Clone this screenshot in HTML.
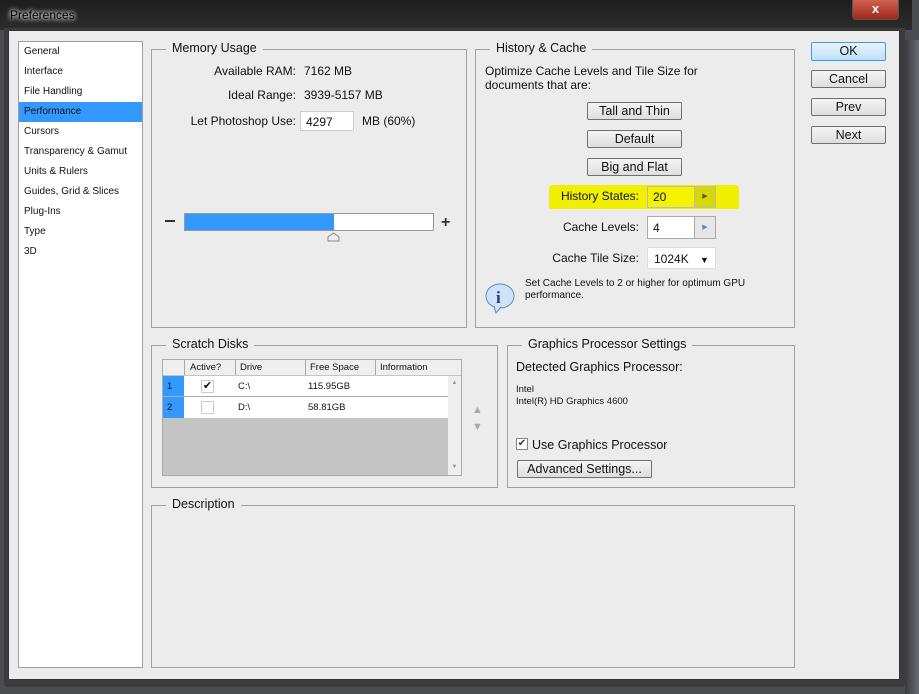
<!DOCTYPE html>
<html><head><style>
*{margin:0;padding:0;box-sizing:border-box}
body{width:919px;height:694px;background:#4a4c52;font-family:"Liberation Sans",sans-serif;font-size:12px;color:#111;position:relative;overflow:hidden}
.a{position:absolute}
.grp{position:absolute;border:1px solid #a0a0a0}
.gt{position:absolute;top:-9px;left:14px;background:#ececec;padding:0 6px;font-size:12.5px;color:#111}
.btn{position:absolute;border:1px solid #707070;border-radius:2px;background:linear-gradient(#f4f4f4,#dedede);text-align:center;font-size:12.5px;line-height:16px}
.side div{height:20px;line-height:20px;padding-left:5px;font-size:10px}
.r{text-align:right}
</style></head><body>
<div class="a" style="left:0;top:0;width:912px;height:30px;background:linear-gradient(#1e1e1e,#2c2c2c)"></div>
<div class="a" style="left:10px;top:8px;font-size:12px;color:#000;text-shadow:0 0 6px #fff,0 0 4px #fff">Preferences</div>
<div class="a" style="left:852px;top:0;width:47px;height:20px;border:1px solid #555;border-top:none;border-radius:0 0 4px 4px;background:linear-gradient(#d06050,#a02818);color:#fff;text-align:center;font-weight:bold;font-size:13px;line-height:18px">x</div>
<div class="a" style="left:905px;top:40px;width:14px;height:654px;background:linear-gradient(90deg,#3a3a3e,#6a6c74)"></div>
<div class="a" style="left:4px;top:28px;width:901px;height:659px;background:#3c3c3c;border-radius:0 0 3px 3px"></div>
<div class="a" style="left:8px;top:30px;width:892px;height:650px;background:#ececec;border:1px solid #333"></div>

<div class="a side" style="left:18px;top:41px;width:125px;height:627px;background:#fff;border:1px solid #a0a0a0">
<div>General</div><div>Interface</div><div>File Handling</div><div style="background:#3399ff">Performance</div><div>Cursors</div><div>Transparency &amp; Gamut</div><div>Units &amp; Rulers</div><div>Guides, Grid &amp; Slices</div><div>Plug-Ins</div><div>Type</div><div>3D</div>
</div>

<div class="grp" style="left:151px;top:49px;width:316px;height:279px"><span class="gt">Memory Usage</span></div>
<div class="a r" style="left:160px;top:64px;width:136px">Available RAM:</div><div class="a" style="left:304px;top:64px">7162 MB</div>
<div class="a r" style="left:160px;top:88px;width:136px">Ideal Range:</div><div class="a" style="left:304px;top:88px">3939-5157 MB</div>
<div class="a r" style="left:160px;top:114px;width:136px">Let Photoshop Use:</div>
<div class="a" style="left:300px;top:111px;width:54px;height:20px;background:#fff;border:1px solid #ccc;padding:3px 5px">4297</div>
<div class="a" style="left:362px;top:114px">MB (60%)</div>
<div class="a" style="left:165px;top:220px;width:10px;height:2px;background:#333"></div>
<div class="a" style="left:184px;top:213px;width:250px;height:18px;background:#fff;border:1px solid #999"><div style="width:149px;height:16px;background:#3399ff"></div></div>
<div class="a" style="left:441px;top:214px;font-size:16px;font-weight:bold;color:#333">+</div>
<svg class="a" style="left:327px;top:232px" width="13" height="10"><path d="M1 9V5L6.5 1 12 5v4z" fill="#eee" stroke="#888"/></svg>

<div class="grp" style="left:475px;top:49px;width:320px;height:279px"><span class="gt">History &amp; Cache</span></div>
<div class="a" style="left:485px;top:64px;line-height:14px">Optimize Cache Levels and Tile Size for<br>documents that are:</div>
<div class="btn" style="left:587px;top:102px;width:95px;height:18px">Tall and Thin</div>
<div class="btn" style="left:587px;top:130px;width:95px;height:18px">Default</div>
<div class="btn" style="left:587px;top:158px;width:95px;height:18px">Big and Flat</div>
<div class="a" style="left:549px;top:185px;width:190px;height:24px;background:#f0f000;border-radius:3px"></div>
<div class="a r" style="left:520px;top:189px;width:119px">History States:</div>
<div class="a" style="left:647px;top:186px;width:69px;height:22px;border:1px solid #bbb;background:#f4f400;padding:3px 5px">20</div>
<div class="a" style="left:694px;top:187px;width:21px;height:20px;background:#d8d800;border-left:1px solid #bbb;font-size:7px;text-align:center;line-height:20px;color:#555">▶</div>
<div class="a r" style="left:520px;top:220px;width:119px">Cache Levels:</div>
<div class="a" style="left:647px;top:216px;width:69px;height:23px;border:1px solid #aaa;background:#fff;padding:4px 5px">4</div>
<div class="a" style="left:694px;top:217px;width:21px;height:21px;background:#e6e6e6;border-left:1px solid #aaa;font-size:7px;text-align:center;line-height:21px;color:#68a">▶</div>
<div class="a r" style="left:520px;top:251px;width:119px">Cache Tile Size:</div>
<div class="a" style="left:647px;top:247px;width:69px;height:22px;border:1px solid #ddd;background:#fff;padding:4px 6px">1024K <span style="font-size:9px;margin-left:8px">▼</span></div>
<svg class="a" style="left:484px;top:282px" width="34" height="32"><ellipse cx="16" cy="14" rx="14" ry="12" fill="#cfe3f8" stroke="#5b88c0"/><path d="M10 24l2 7 5-6" fill="#cfe3f8" stroke="#5b88c0"/><text x="12" y="21" font-family="Liberation Serif" font-weight="bold" font-size="17" fill="#1a3f8a">i</text></svg>
<div class="a" style="left:525px;top:278px;font-size:10px;line-height:12px">Set Cache Levels to 2 or higher for optimum GPU<br>performance.</div>

<div class="btn" style="left:811px;top:42px;width:75px;height:19px;border-color:#3c9ee0;background:linear-gradient(#e8f4fd,#bfe0f8)">OK</div>
<div class="btn" style="left:811px;top:70px;width:75px;height:18px">Cancel</div>
<div class="btn" style="left:811px;top:98px;width:75px;height:18px">Prev</div>
<div class="btn" style="left:811px;top:126px;width:75px;height:18px">Next</div>

<div class="grp" style="left:151px;top:345px;width:347px;height:143px"><span class="gt">Scratch Disks</span></div>
<div class="a" style="left:162px;top:359px;width:300px;height:117px;background:#c4c4c4;border:1px solid #aaa"></div>
<div class="a" style="left:163px;top:360px;width:298px;height:15px;background:#efefef;font-size:9.5px;line-height:15px">
<span class="a" style="left:21px;width:1px;height:15px;background:#aaa"></span><span class="a" style="left:27px">Active?</span>
<span class="a" style="left:72px;width:1px;height:15px;background:#aaa"></span><span class="a" style="left:77px">Drive</span>
<span class="a" style="left:142px;width:1px;height:15px;background:#aaa"></span><span class="a" style="left:147px">Free Space</span>
<span class="a" style="left:212px;width:1px;height:15px;background:#aaa"></span><span class="a" style="left:217px">Information</span></div>
<div class="a" style="left:163px;top:376px;width:285px;height:42px;background:#fff;font-size:9.5px">
<div class="a" style="left:0;top:0;width:21px;height:42px;background:#3399ff"></div>
<div class="a" style="left:0;top:20px;width:285px;height:1px;background:#aaa"></div>
<span class="a" style="left:4px;top:5px">1</span><span class="a" style="left:4px;top:26px">2</span>
<span class="a" style="left:38px;top:4px;width:13px;height:13px;border:1px solid #ccc;font-size:11px;line-height:11px;text-align:center">✔</span>
<span class="a" style="left:38px;top:25px;width:13px;height:13px;border:1px solid #ccc"></span>
<span class="a" style="left:75px;top:5px">C:\</span><span class="a" style="left:75px;top:26px">D:\</span>
<span class="a" style="left:145px;top:5px">115.95GB</span><span class="a" style="left:145px;top:26px">58.81GB</span></div>
<div class="a" style="left:448px;top:376px;width:13px;height:99px;background:#eee;font-size:6px;color:#999;text-align:center"><div style="margin-top:4px">▲</div><div style="margin-top:78px">▼</div></div>
<div class="a" style="left:472px;top:402px;font-size:11px;color:#aaa;line-height:17px">▲<br>▼</div>

<div class="grp" style="left:507px;top:345px;width:288px;height:143px"><span class="gt">Graphics Processor Settings</span></div>
<div class="a" style="left:516px;top:360px;font-size:12.5px">Detected Graphics Processor:</div>
<div class="a" style="left:516px;top:384px;font-size:9.5px;line-height:12px">Intel<br>Intel(R) HD Graphics 4600</div>
<div class="a" style="left:516px;top:438px;width:12px;height:12px;border:1px solid #888;background:#fff;font-size:10px;line-height:10px;text-align:center;color:#336">✔</div>
<div class="a" style="left:532px;top:438px;font-size:12.5px">Use Graphics Processor</div>
<div class="btn" style="left:517px;top:460px;width:135px;height:18px">Advanced Settings...</div>

<div class="grp" style="left:151px;top:505px;width:644px;height:163px"><span class="gt">Description</span></div>
</body></html>
